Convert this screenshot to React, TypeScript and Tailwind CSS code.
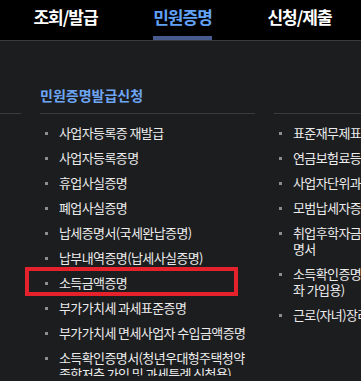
import React from 'react';

const tabs = [
  { label: '조회/발급', active: false },
  { label: '민원증명', active: true },
  { label: '신청/제출', active: false },
];

const leftItems: string[][] = [
  ['사업자등록증 재발급'],
  ['사업자등록증명'],
  ['휴업사실증명'],
  ['폐업사실증명'],
  ['납세증명서(국세완납증명)'],
  ['납부내역증명(납세사실증명)'],
  ['소득금액증명'],
  ['부가가치세 과세표준증명'],
  ['부가가치세 면세사업자 수입금액증명'],
  ['소득확인증명서(청년우대형주택청약', '종합저축 가입 및 과세특례 신청용)'],
];

const rightItems: string[][] = [
  ['표준재무제표증명'],
  ['연금보험료등소득·세액공제확인서'],
  ['사업자단위과세 적용 종된사업장 증명'],
  ['모범납세자증명'],
  ['취업후학자금상환액 원천공제 증', '명서'],
  ['소득확인증명서(개인종합자산관리계', '좌 가입용)'],
  ['근로(자녀)장려금 수급사실 증명'],
];

const ItemList = ({ items }: { items: string[][] }) => (
  <ul className="pt-[11px]">
    {items.map((lines, i) => (
      <li key={i} className="flex mb-[9px] text-[13px] leading-[16px] tracking-[-0.6px] text-[#ececec]">
        <span className="w-[19px] shrink-0 flex items-start pt-[7px] pl-[5px]">
          <span className="block w-[3px] h-[3px] bg-[#8d8d8d]" />
        </span>
        <span className="whitespace-nowrap">
          {lines.map((l, j) => (
            <span key={j} className="block">
              {l}
            </span>
          ))}
        </span>
      </li>
    ))}
  </ul>
);

export default function App() {
  return (
    <div
      className="relative w-[361px] h-[381px] overflow-hidden bg-[#1c1d1f]"
      style={{ fontFamily: '"Noto Sans CJK KR", "Noto Sans", sans-serif' }}
    >
      <nav className="flex h-[41px] bg-black border-b border-[#3a3a3a] pl-[7px]">
        {tabs.map((t) => (
          <div key={t.label} className="w-[117px] flex justify-center items-end">
            <span
              className={
                'h-[40px] flex items-center pb-[3px] text-[17px] font-bold tracking-[-1px] ' +
                (t.active ? 'text-[#62a2f6] border-b-4 border-[#485b8f]' : 'text-white border-b-4 border-transparent')
              }
            >
              {t.label}
            </span>
          </div>
        ))}
      </nav>

      <div className="h-[335px] overflow-hidden">
        <div className="flex gap-[19px] ml-[-194px] pt-[44px]">
          <div className="w-[215px] shrink-0">
            <div className="h-[20px]" />
            <div className="mt-[8px] border-b border-[#3c3c3c]" />
          </div>
          <div className="w-[215px] shrink-0">
            <h2 className="h-[20px] text-[14px] leading-[20px] font-bold text-[#6ea6f4]">
              민원증명발급신청
            </h2>
            <div className="mt-[8px] border-b border-[#3c3c3c]" />
            <ItemList items={leftItems} />
          </div>
          <div className="w-[215px] shrink-0">
            <div className="h-[20px]" />
            <div className="mt-[8px] border-b border-[#3c3c3c]" />
            <ItemList items={rightItems} />
          </div>
        </div>
      </div>

      <div className="absolute left-[25px] top-[267px] w-[213px] h-[29px] border-4 border-[#e5212b]" />
    </div>
  );
}
